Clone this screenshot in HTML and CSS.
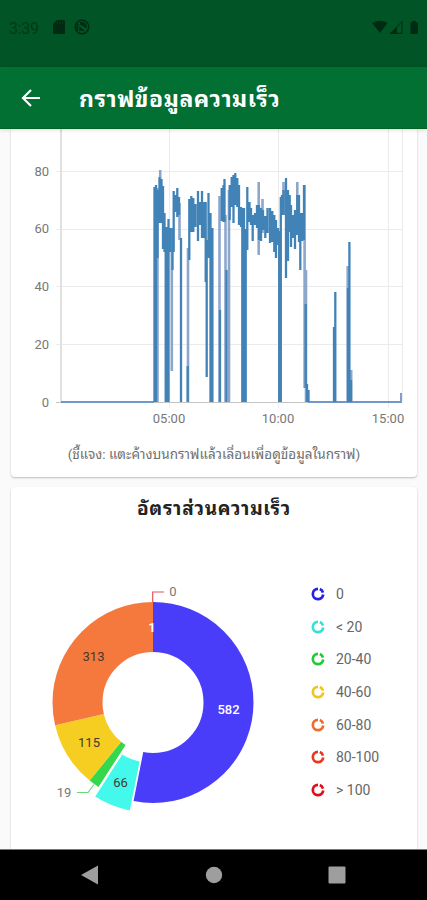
FILE: index.html
```
<!DOCTYPE html>
<html lang="th">
<head>
<meta charset="utf-8">
<title>กราฟข้อมูลความเร็ว</title>
<link rel="stylesheet" href="styles.css">
</head>
<body>
<div class="screen">
  <header class="status">
    <span class="clock">3:39</span>
    <svg class="sd" width="12" height="14" viewBox="0 0 12 14"><path d="M4 0H10.500Q12 0 12 1.500V12.500Q12 14 10.500 14H1.500Q0 14 0 12.500V4Z"/><path class="notch" d="M4.500 2v2M7 2v2M9.500 2v2"/></svg>
    <svg class="sync" width="16" height="16" viewBox="0 0 16 16"><circle cx="8" cy="8" r="6.800"/><path d="M4 11A5 5 0 0 1 4.500 5M6 4Q11 3 12 8L6 4.500M5 8l5 4M5 11h3"/></svg>
    <span class="spacer"></span>
    <svg width="48" height="16" viewBox="0 0 48 16"><path d="M0 3Q8 -1.500 15.500 3L8 13Z"/><path class="thin" d="M18.500 13.300L30 1.500V13.300Z"/><path d="M18 14L25 7V14Z"/><path d="M40 1h4v1.500h2V14h-7.500V2.500H40Z"/></svg>
  </header>
  <header class="appbar">
    <svg width="20" height="20" viewBox="0 0 20 20"><path d="M19 10H2M10 2L2 10L10 18"/></svg>
    <h1>กราฟข้อมูลความเร็ว</h1>
  </header>
  <main>
    <section class="card speed">
      <svg width="406" height="300" viewBox="11 129 406 300">
        <path class="grid" d="M56 171.500H402M56 229.500H402M56 286.500H402M56 344.500H402M169.500 129V408M278.500 129V408M388.500 129V408M402.500 129V402"/>
        <path class="axis" d="M61 129V402"/>
        <path class="base" d="M56 402.500H402"/>
        <g class="tick end"><text x="49" y="175.500">80</text><text x="49" y="233">60</text><text x="49" y="291">40</text><text x="49" y="348.500">20</text><text x="49" y="406.500">0</text></g>
        <g class="tick mid"><text x="169" y="423">05:00</text><text x="278" y="423">10:00</text><text x="388" y="423">15:00</text></g>
        <path class="light" d="M157.500 188V402M160.200 170V223M171.800 228V371M179.500 203V240M188 248V402M225.500 215V402M229 190V402M219.500 196V402M258.700 182V255M262.500 199V233M283.500 182V215M297.300 182V235M304.600 185V388M306 270V402M347.700 266V402M351.200 370V402"/>
        <path class="flat" d="M61 402H154M308 402H401V393"/>
        <path class="data" d="M154.500 187V402M156 185V402M157.500 190V258M159.500 177V223M161.500 179V223M163 186V249M164.500 213V252M165.700 227V402M167 227V402M168.500 219V402M170 228V252M172.500 228V270M173.700 191V252M175.500 195V212M177.300 188V217M179 197V215M181 238V402M187.700 366V402M189.300 199V260M191.300 196V232M193.300 198V232M195.500 204V227M198 191V241M200 202V225M202 191V238M204 202V238M205.700 202V282M206.700 240V377M208.500 193V258M210.500 213V402M212.400 228V402M220 310V402M221.700 188V221M223.500 185V222M224.500 179V222M226.500 270V402M229.700 185V220M231.700 177V207M233.500 175V223M235.300 173V205M237.300 178V207M239 185V225M241 207V227M242.300 208V402M244 208V402M245.700 229V402M247.300 187V250M249.500 202V222M251 208V225M252.700 215V241M255 213V225M257 205V228M259 205V240M261 208V241M263 210V230M265.300 216V238M267.500 208V233M270 208V243M272.300 211V242M274.300 215V252M276 220V258M278 228V245M279.200 231V402M280.800 197V402M282 195V215M283.500 190V215M286 178V278M288 190V261M289.700 195V232M291 205V247M293 215V238M295 210V249M297.300 195V235M299 195V242M300.300 213V270M302.300 213V241M304 185V240M305.700 304V388M307 384V402M308.500 390V402M334 327V402M335.300 292V402M348 288V402M349.400 242V402M351 380V402"/>
      </svg>
      <p class="note">(ชี้แจง: แตะค้างบนกราฟแล้วเลื่อนเพื่อดูข้อมูลในกราฟ)</p>
    </section>
    <section class="card ratio">
      <h2>อัตราส่วนความเร็ว</h2>
      <div class="pie">
        <svg width="280" height="260" viewBox="11 570 280 260">
          <g class="ring" transform="rotate(-90 153 702.500)">
            <circle class="c0" pathLength="1096" stroke-dasharray="582 514" cx="153" cy="702.500" r="75.500"/>
            <circle class="c2" pathLength="1096" stroke-dasharray="19 1077" stroke-dashoffset="-648" cx="153" cy="702.500" r="75.500"/>
            <circle class="c3" pathLength="1096" stroke-dasharray="115 981" stroke-dashoffset="-667" cx="153" cy="702.500" r="75.500"/>
            <circle class="c4" pathLength="1096" stroke-dasharray="314 782" stroke-dashoffset="-782" cx="153" cy="702.500" r="75.500"/>
            <circle class="c1" pathLength="1096" stroke-dasharray="65 1031" stroke-dashoffset="-582.500" cx="143.500" cy="699" r="75.500"/>
          </g>
          <path class="lead red" d="M152.700 602V592H164"/><path class="lead green" d="M77 792.500H88L94 784.500"/>
          <g class="tick mid"><text x="173" y="596">0</text><text x="64" y="797">19</text>
          <g class="dark"><text x="93.500" y="660.500">313</text><text x="89" y="747">115</text><text x="120.500" y="786.500">66</text></g>
          <g class="white"><text x="152" y="632">1</text><text x="228.500" y="714">582</text></g></g>
        </svg>
        <ul class="legend">
          <li class="k0"><svg viewBox="0 0 14 14"><path d="M7 1.800A5.200 5.200 0 1 0 12.200 7.500"/><path d="M8.800 2.100A5.200 5.200 0 0 1 12 5.600"/></svg>0</li>
          <li class="k1"><svg viewBox="0 0 14 14"><path d="M7 1.800A5.200 5.200 0 1 0 12.200 7.500"/><path d="M8.800 2.100A5.200 5.200 0 0 1 12 5.600"/></svg>&lt; 20</li>
          <li class="k2"><svg viewBox="0 0 14 14"><path d="M7 1.800A5.200 5.200 0 1 0 12.200 7.500"/><path d="M8.800 2.100A5.200 5.200 0 0 1 12 5.600"/></svg>20-40</li>
          <li class="k3"><svg viewBox="0 0 14 14"><path d="M7 1.800A5.200 5.200 0 1 0 12.200 7.500"/><path d="M8.800 2.100A5.200 5.200 0 0 1 12 5.600"/></svg>40-60</li>
          <li class="k4"><svg viewBox="0 0 14 14"><path d="M7 1.800A5.200 5.200 0 1 0 12.200 7.500"/><path d="M8.800 2.100A5.200 5.200 0 0 1 12 5.600"/></svg>60-80</li>
          <li class="k5"><svg viewBox="0 0 14 14"><path d="M7 1.800A5.200 5.200 0 1 0 12.200 7.500"/><path d="M8.800 2.100A5.200 5.200 0 0 1 12 5.600"/></svg>80-100</li>
          <li class="k6"><svg viewBox="0 0 14 14"><path d="M7 1.800A5.200 5.200 0 1 0 12.200 7.500"/><path d="M8.800 2.100A5.200 5.200 0 0 1 12 5.600"/></svg>&gt; 100</li>
        </ul>
      </div>
    </section>
  </main>
  <nav>
    <svg width="18" height="20" viewBox="0 0 18 20"><path d="M0 10L17 .5V19.500Z"/></svg>
    <svg width="18" height="18" viewBox="0 0 18 18"><circle cx="9" cy="9" r="8.200"/></svg>
    <svg width="18" height="18" viewBox="0 0 18 18"><rect x=".5" y=".5" width="17" height="17" rx="1"/></svg>
  </nav>
</div>
</body>
</html>
```
FILE: styles.css
```
* { box-sizing: border-box; }
body { margin: 0; font-family: Roboto, "Noto Sans Thai Looped", "Noto Looped Thai", Loma, Waree, Garuda, "Noto Sans Thai", sans-serif; }
svg { display: block; flex: none; }
h1, h2, p, ul { margin: 0; padding: 0; }
.screen { display: flex; flex-direction: column; width: 427px; height: 900px; overflow: hidden; background: #fafafa; }
.status { display: flex; align-items: flex-start; height: 67px; flex: none; padding: 20px 7px 0 9px; background: #015425; }
.status svg { fill: #012a12; }
.clock { width: 44px; font-size: 16px; line-height: 17px; color: #013919; letter-spacing: -.3px; }
.notch { stroke: #015425; fill: none; opacity: .6; }
.status .sync { margin-left: 9px; margin-top: -1px; fill: none; stroke: #012a12; stroke-width: 1.500; }
.status .thin { fill: none; stroke: #012a12; }
.spacer { flex: 1; }
.appbar { display: flex; align-items: center; height: 62px; flex: none; padding: 0 21px; gap: 38px; background: #026f33; border-bottom: 1px solid #02621f; box-shadow: 0 1px 4px rgba(0,0,0,.15); z-index: 1; }
.appbar svg { fill: none; stroke: #fff; stroke-width: 2.200; }
h1 { font-size: 23px; line-height: 30px; padding-top: 4px; letter-spacing: .530px; font-weight: 700; color: #fff; white-space: nowrap; }
main { flex: 1; min-height: 0; overflow: hidden; padding: 0 10px 0 11px; display: flex; flex-direction: column; gap: 10px; }
.card { background: #fff; box-shadow: 0 1px 2px rgba(0,0,0,.25); flex: none; }
.speed { height: 348px; border-radius: 0 0 4px 4px; }
.ratio { height: 380px; border-radius: 4px 4px 0 0; }
.grid { stroke: #ebebeb; fill: none; }
.axis { stroke: #e0e0e0; stroke-width: 2; }
.base { stroke: #c4c4c4; }
.data { stroke: #4283b7; stroke-width: 2.300; fill: none; }
.flat { stroke: #7196c8; stroke-width: 1.800; fill: none; }
.light { stroke: #8da7cc; stroke-width: 2.600; fill: none; }
.tick { font-size: 13px; fill: #777; }
.end { text-anchor: end; }
.mid { text-anchor: middle; }
.note { text-align: center; font-size: 13.500px; letter-spacing: 0; line-height: 20px; margin-top: 15px; color: #707070; white-space: nowrap; }
h2 { text-align: center; font-size: 19px; letter-spacing: .700px; line-height: 28px; padding-top: 8px; height: 82px; color: #222; }
.pie { display: flex; }
.pie > svg { margin-top: 1px; }
.ring circle { fill: none; stroke-width: 50; }
.ring .c0 { stroke: #4a3dfa; }
.ring .c1 { stroke: #43f9eb; }
.ring .c2 { stroke: #33d84c; }
.ring .c3 { stroke: #f6ce22; }
.ring .c4 { stroke: #f5793d; }
.lead { fill: none; stroke-width: 1.200; }
.red { stroke: #e65361; }
.green { stroke: #68d879; }
.dark { fill: #44392f; }
.white { fill: #fff; font-weight: 500; }
.legend { list-style: none; padding: 9px 0 0 20px; }
.legend li { display: flex; align-items: center; gap: 11px; height: 32.600px; font-size: 14px; color: #666; white-space: nowrap; }
.legend svg { width: 14px; height: 14px; fill: none; stroke: currentColor; stroke-width: 2.700; }
.k0 svg { color: #2720e0; }
.k1 svg { color: #36e0da; }
.k2 svg { color: #20cb35; }
.k3 svg { color: #efc520; }
.k4 svg { color: #f06b2c; }
.k5 svg { color: #ec3720; }
.k6 svg { color: #dc1018; }
nav { display: flex; align-items: center; height: 51px; flex: none; padding: 0 81px 0 81px; justify-content: space-between; background: #000; border-top: 1px solid #777; z-index: 1; }
nav svg { fill: #9e9e9e; }
```
